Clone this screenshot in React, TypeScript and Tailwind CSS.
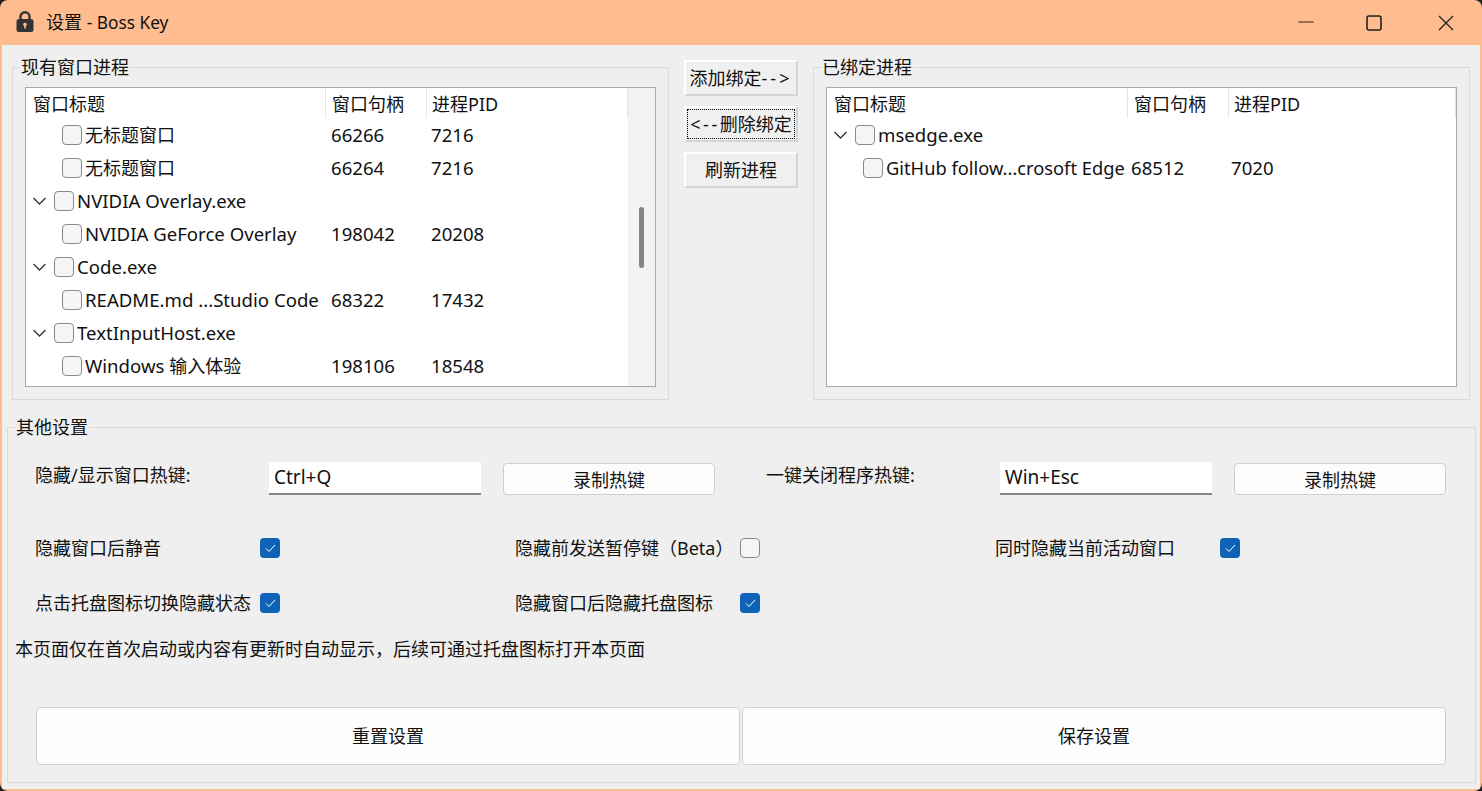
import type { ReactNode } from "react";

const font = { className: "font-['Noto_Sans','Noto_Sans_CJK_SC',sans-serif]" };

type Row = { title: ReactNode; handle?: string; pid?: string; parent?: boolean };

const leftRows: Row[] = [
  { title: <span className="text-[18px]">无标题窗口</span>, handle: "66266", pid: "7216" },
  { title: <span className="text-[18px]">无标题窗口</span>, handle: "66264", pid: "7216" },
  { title: "NVIDIA Overlay.exe", parent: true },
  { title: "NVIDIA GeForce Overlay", handle: "198042", pid: "20208" },
  { title: "Code.exe", parent: true },
  { title: "README.md ...Studio Code", handle: "68322", pid: "17432" },
  { title: "TextInputHost.exe", parent: true },
  { title: <>Windows <span className="text-[18px]">输入体验</span></>, handle: "198106", pid: "18548" },
];

const rightRows: Row[] = [
  { title: "msedge.exe", parent: true },
  { title: <span className="text-[18.3px]">GitHub follow...crosoft Edge</span>, handle: "68512", pid: "7020" },
];

function GroupBox({ title, className, titleClass, children }: { title: string; className: string; titleClass: string; children: ReactNode }) {
  return (
    <div className={`relative border border-[#dadada] ${className}`}>
      <span className={`absolute top-[-14px] h-[26px] bg-[#efefef] px-[1px] text-[18px] leading-[26px] ${titleClass}`}>{title}</span>
      {children}
    </div>
  );
}

function TreeCheck() {
  return <span className="block h-5 w-5 shrink-0 rounded-[4px] border border-[#8a8a8a] bg-[#f5f5f5]" />;
}

function Chevron() {
  return (
    <svg width="13" height="8" viewBox="0 0 13 8" className="shrink-0" fill="none" stroke="#333" strokeWidth="1.3">
      <path d="M0.5 1l6 6 6-6" />
    </svg>
  );
}

function Tree({ rows, scrollbar, titleWidth, cellPad }: { rows: Row[]; scrollbar?: boolean; titleWidth: string; cellPad: string }) {
  return (
    <div className="flex h-[300px] w-[631px] overflow-hidden border border-[#a9a9a9] bg-white">
      <div className="min-w-0 flex-1">
        <div className="flex h-[30px] items-center text-[18px]">
          <div className={`flex h-full items-center border-r border-[#e5e5e5] pl-[7px] pt-[3px] ${titleWidth}`}>窗口标题</div>
          <div className="flex h-full w-[101px] items-center border-r border-[#e5e5e5] pl-[6px] pt-[3px]">窗口句柄</div>
          <div className="flex h-full flex-1 items-center border-r border-[#e5e5e5] pl-[5px] pt-[3px]">进程PID</div>
        </div>
        {rows.map((row, i) => (
          <div key={i} className="flex h-[33px] items-center text-[18.6px] leading-[33px] whitespace-nowrap">
            <div className={`flex items-center ${titleWidth} ${row.parent ? "pl-[7px]" : "pl-[36px]"}`}>
              {row.parent && <Chevron />}
              <span className={row.parent ? "ml-[8px]" : ""}>
                <TreeCheck />
              </span>
              <span className="ml-[3px]">{row.title}</span>
            </div>
            <div className={`w-[100px] ${cellPad}`}>{row.handle}</div>
            <div className={cellPad}>{row.pid}</div>
          </div>
        ))}
      </div>
      {scrollbar && (
        <div className="relative w-[27px] shrink-0 bg-[#f3f3f3]">
          <div className="absolute left-[11px] top-[119px] h-[61px] w-[5px] rounded-full bg-[#858585]" />
        </div>
      )}
    </div>
  );
}

function SideButton({ children, focused }: { children: ReactNode; focused?: boolean }) {
  return (
    <button
      className={`h-[36px] w-[114px] border-2 border-t-white border-l-white border-r-[#d4d4d4] border-b-[#d4d4d4] bg-[#f0f0f0] text-[18px] leading-none whitespace-nowrap ${
        focused ? "outline outline-1 outline-dotted outline-offset-[-4px] outline-black" : ""
      }`}
    >
      {children}
    </button>
  );
}

function HotkeyInput({ value }: { value: string }) {
  return (
    <div className="flex h-[33px] w-[212px] items-center border-b-2 border-[#858585] bg-white pl-[5px] text-[19px]">
      {value}
    </div>
  );
}

function RecordButton() {
  return (
    <button className="mt-[1px] h-[32px] w-[212px] rounded-[4px] border border-[#cfcfcf] bg-[#fcfcfc] pt-[1px] text-[18px] leading-none">
      录制热键
    </button>
  );
}

function Option({ label, checked }: { label: string; checked: boolean }) {
  return (
    <div className="flex h-5 items-center">
      <span className="w-[225px] text-[18px] whitespace-nowrap">{label}</span>
      {checked ? (
        <span className="flex h-5 w-5 items-center justify-center rounded-[4px] bg-[#0f62b8]">
          <svg width="11" height="9" viewBox="0 0 11 9" fill="none" stroke="white" strokeWidth="1">
            <path d="M1 4.5l3 3 6-6.5" />
          </svg>
        </span>
      ) : (
        <span className="h-5 w-5 rounded-[4px] border border-[#8a8a8a] bg-[#f5f5f5]" />
      )}
    </div>
  );
}

function BigButton({ label }: { label: string }) {
  return (
    <button className="h-[58px] w-[704px] rounded-[4px] border border-[#cfcfcf] bg-[#fdfdfd] text-[18px] leading-none">
      {label}
    </button>
  );
}

export default function App() {
  return (
    <div className={`h-[791px] w-[1482px] overflow-hidden bg-[#222222] text-[#111111] ${font.className}`}>
      <div className="flex h-full flex-col overflow-hidden rounded-[8px] bg-[#ffbd8f]">
        <header className="flex h-[45px] shrink-0 items-center pl-4">
          <svg width="18" height="21" viewBox="0 0 18 21" className="mb-[2px] shrink-0">
            <path d="M4.5 9V5.8a4.5 4.5 0 0 1 9 0V9" fill="none" stroke="#333" strokeWidth="2.4" />
            <rect x="0.5" y="8" width="17" height="13" rx="2.5" fill="#333" />
            <circle cx="9" cy="13.5" r="1.8" fill="#ffbd8f" />
            <rect x="8.2" y="14" width="1.6" height="3.5" fill="#ffbd8f" />
          </svg>
          <span className="ml-[12px] text-[18px]">
            设置 <span className="text-[17.3px]">- Boss Key</span>
          </span>
          <div className="ml-auto flex h-full items-center">
            <svg width="16" height="16" viewBox="0 0 16 16" className="mr-[52px]" stroke="#222" strokeWidth="1.2" fill="none">
              <path d="M0.5 7h15" />
            </svg>
            <svg width="16" height="16" viewBox="0 0 16 16" className="mr-[56px]" stroke="#222" strokeWidth="1.6" fill="none">
              <rect x="1" y="1" width="14" height="14" rx="2" />
            </svg>
            <svg width="16" height="16" viewBox="0 0 16 16" className="mr-[28px]" stroke="#222" strokeWidth="1.3" fill="none">
              <path d="M1 1l14 14M15 1L1 15" />
            </svg>
          </div>
        </header>

        <main className="mx-[2px] h-[744px] shrink-0 bg-[#efefef]">
          <div className="flex pl-[10px] pt-[15px]">
            <GroupBox title="现有窗口进程" className="mt-[7px] h-[333px] w-[657px] pl-[12px] pt-[19px]" titleClass="left-[7px]">
              <Tree rows={leftRows} scrollbar titleWidth="w-[300px]" cellPad="pl-[5px]" />
            </GroupBox>
            <div className="ml-[15px] flex flex-col gap-[10px]">
              <SideButton>
                添加绑定<span className="tracking-[3px]">--&gt;</span>
              </SideButton>
              <SideButton focused>
                <span className="tracking-[2.6px]">&lt;--</span>删除绑定
              </SideButton>
              <SideButton>刷新进程</SideButton>
            </div>
            <GroupBox title="已绑定进程" className="ml-[15px] mt-[7px] h-[333px] w-[657px] pl-[12px] pt-[19px]" titleClass="left-[7px]">
              <Tree rows={rightRows} titleWidth="w-[301px]" cellPad="pl-[3px]" />
            </GroupBox>
          </div>

          <GroupBox title="其他设置" className="ml-[5px] mt-[27px] h-[356px] w-[1469px] pl-[7px] pt-[34px]" titleClass="left-[7px]">
            <div className="flex items-start pl-[20px]">
              <span className="h-[26px] w-[234px] text-[18px] leading-[26px]">隐藏/显示窗口热键:</span>
              <HotkeyInput value="Ctrl+Q" />
              <div className="ml-[22px]">
                <RecordButton />
              </div>
              <span className="ml-[51px] h-[26px] w-[234px] text-[18px] leading-[26px]">一键关闭程序热键:</span>
              <HotkeyInput value="Win+Esc" />
              <div className="ml-[22px]">
                <RecordButton />
              </div>
            </div>

            <div className="mt-[43px] grid grid-cols-[480px_480px_480px] gap-y-[35px] pl-[20px]">
              <Option label="隐藏窗口后静音" checked />
              <Option label="隐藏前发送暂停键（Beta）" checked={false} />
              <Option label="同时隐藏当前活动窗口" checked />
              <Option label="点击托盘图标切换隐藏状态" checked />
              <Option label="隐藏窗口后隐藏托盘图标" checked />
            </div>

            <p className="mt-[23px] h-[26px] text-[18px] leading-[26px]">
              本页面仅在首次启动或内容有更新时自动显示，后续可通过托盘图标打开本页面
            </p>

            <div className="mt-[45px] flex gap-[2px] pl-[21px]">
              <BigButton label="重置设置" />
              <BigButton label="保存设置" />
            </div>
          </GroupBox>
        </main>
      </div>
    </div>
  );
}
